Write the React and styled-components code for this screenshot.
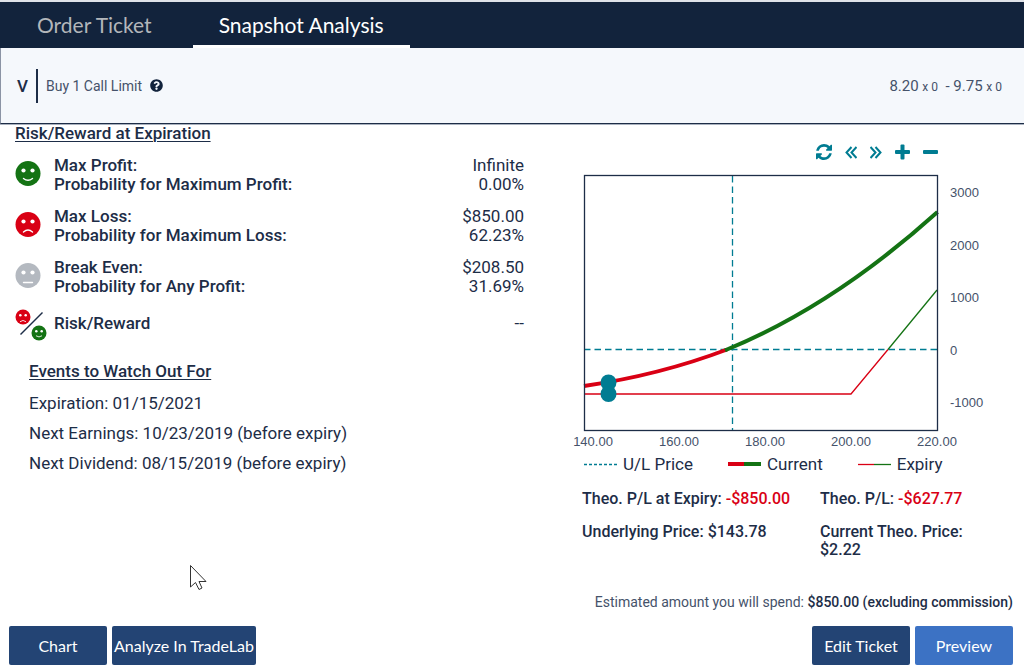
import React, { useState } from "react";
import styled, { createGlobalStyle } from "styled-components";
import { FaQuestionCircle } from "react-icons/fa";

const GlobalStyle = createGlobalStyle`
  * {
    box-sizing: border-box;
  }

  body {
    margin: 0;
    background: #ffffff;
    color: #1d2d47;
    font-family: Roboto, "Liberation Sans", sans-serif;
  }

  h2, h3, p, dl, dt, dd, ul {
    margin: 0;
    padding: 0;
  }
`;

const Page = styled.div`
  display: flex;
  flex-direction: column;
  min-height: 100vh;
  position: relative;
`;

const TabBar = styled.nav`
  display: flex;
  gap: 15px;
  height: 48px;
  padding-left: 11px;
  border-top: 2px solid #dfe2e8;
  background: #12233c;
`;

const Tab = styled.button`
  padding: 3px 26px 0;
  border: 0;
  border-bottom: 3px solid ${({ $active }) => ($active ? "#ffffff" : "transparent")};
  background: none;
  color: ${({ $active }) => ($active ? "#ffffff" : "#b3b6ba")};
  font-family: Lato, sans-serif;
  font-size: 21px;
  line-height: 24px;
  white-space: nowrap;
  cursor: pointer;
`;

const OrderBar = styled.header`
  display: flex;
  align-items: center;
  height: 76px;
  padding: 0 22px 0 16px;
  border-left: 1px solid #8b94a5;
  border-bottom: 1px solid #1d2d47;
  box-shadow: 0 1px 0 #a9b1be;
  background: #f5f8fc;
`;

const Ticker = styled.span`
  padding-right: 8px;
  border-right: 2px solid #1d2d47;
  font-size: 17px;
  font-weight: 500;
  line-height: 34px;
`;

const OrderText = styled.span`
  display: flex;
  align-items: center;
  gap: 8px;
  flex: 1;
  padding-left: 8px;
  color: #45526a;
  font-size: 14px;

  svg {
    width: 13px;
    height: 13px;
    color: #12233c;
  }
`;

const Quote = styled.span`
  color: #45526a;
  font-size: 15px;
  white-space: pre;

  small {
    font-size: 12px;
  }
`;

const Body = styled.main`
  display: grid;
  grid-template-columns: minmax(0, 509fr) minmax(0, 431fr);
  column-gap: 58px;
  padding: 0 11px 0 15px;
`;

const Heading = styled.h2`
  font-size: 17px;
  font-weight: 500;
  line-height: 18px;
  text-decoration: underline;
  text-decoration-thickness: 1px;
  text-underline-offset: 2px;
`;

const RiskList = styled.dl`
  display: grid;
  gap: 13px;
  margin-top: 14px;
`;

const RiskRow = styled.div`
  display: grid;
  grid-template-columns: 39px 1fr auto;
  align-items: center;
  min-height: 28px;
  font-size: 17px;
  line-height: 19px;

  dt {
    font-weight: 500;
  }

  dd {
    text-align: right;
  }
`;

const FaceCell = styled.div`
  height: 28px;

  svg {
    display: block;
  }
`;

const Events = styled.section`
  margin-top: 25px;
  padding-left: 14px;
`;

const EventList = styled.ul`
  margin-top: 8px;
  list-style: none;
  font-size: 17px;
  line-height: 30px;
`;

const Toolbar = styled.div`
  display: flex;
  justify-content: flex-end;
  gap: 13px;
  padding: 20px 75px 14px 0;
`;

const ToolButton = styled.button`
  display: flex;
  padding: 0;
  border: 0;
  background: none;
  color: #007c92;
  cursor: pointer;
`;

const ChartSvg = styled.svg`
  display: block;
  width: 100%;
  height: auto;
  overflow: visible;

  text {
    fill: #45526a;
    font-family: "Liberation Sans", Arial, sans-serif;
    font-size: 13px;
  }
`;

const Legend = styled.div`
  display: flex;
  gap: 35px;
  margin-top: 4px;
  padding-left: 2px;
  font-size: 17px;
  line-height: 20px;
`;

const LegendItem = styled.span`
  display: flex;
  align-items: center;
  gap: 6px;
`;

const Stats = styled.div`
  display: grid;
  grid-template-columns: 238px 160px;
  row-gap: 15px;
  margin-top: 16px;
  font-size: 16px;
  font-weight: 500;
  line-height: 18px;
`;

const Loss = styled.span`
  color: #d90014;
`;

const Footer = styled.footer`
  margin-top: auto;
  padding: 16px 11px 2px 9px;
`;

const Estimate = styled.p`
  margin-bottom: 15px;
  color: #45526a;
  font-size: 14px;
  line-height: 18px;
  text-align: right;

  strong {
    color: #1d2d47;
    font-weight: 500;
  }
`;

const Actions = styled.div`
  display: flex;
  gap: 5px;
`;

const ActionButton = styled.button`
  min-width: 98px;
  height: 39px;
  margin-left: ${({ $pushRight }) => ($pushRight ? "auto" : "0")};
  padding: 0 2px;
  border: 0;
  border-radius: 2px;
  background: ${({ $primary }) => ($primary ? "#3c72c4" : "#234474")};
  color: #ffffff;
  font-family: Lato, sans-serif;
  font-size: 16px;
  white-space: nowrap;
  cursor: pointer;
`;

const Pointer = styled.svg`
  position: absolute;
  left: 189px;
  top: 564px;
`;

const GREEN = "#147314";
const RED = "#d90014";
const TEAL = "#007c92";
const GRAY = "#b4b9c0";

const mouths = {
  happy: "M8 17.5Q12.5 21 17 17.5",
  sad: "M8 20Q12.5 16 17 20",
  flat: "M8 19.5H17",
};

const FaceShape = ({ mood, color }) => (
  <>
    <circle cx="12.5" cy="12.5" r="12.5" fill={color} />
    <circle cx="8" cy="9.5" r="2.1" fill="#fff" />
    <circle cx="17" cy="9.5" r="2.1" fill="#fff" />
    <path d={mouths[mood]} fill="none" stroke="#fff" strokeWidth="1.4" strokeLinecap="round" />
  </>
);

const Face = (props) => (
  <svg width="26" height="25" viewBox="0 0 26 25" aria-hidden="true">
    <g transform="translate(0.5 0)">
      <FaceShape {...props} />
    </g>
  </svg>
);

const RatioIcon = () => (
  <svg width="32" height="32" viewBox="0 0 32 32" aria-hidden="true">
    <g transform="translate(0.5 0.5) scale(0.6)">
      <FaceShape mood="sad" color={RED} />
    </g>
    <path d="M5.5 25.5L27.5 3.5" stroke="#1d2d47" strokeWidth="1.4" />
    <g transform="translate(16.5 16.5) scale(0.6)">
      <FaceShape mood="happy" color={GREEN} />
    </g>
  </svg>
);

const risks = [
  {
    icon: <Face mood="happy" color={GREEN} />,
    labels: ["Max Profit:", "Probability for Maximum Profit:"],
    values: ["Infinite", "0.00%"],
  },
  {
    icon: <Face mood="sad" color={RED} />,
    labels: ["Max Loss:", "Probability for Maximum Loss:"],
    values: ["$850.00", "62.23%"],
  },
  {
    icon: <Face mood="flat" color={GRAY} />,
    labels: ["Break Even:", "Probability for Any Profit:"],
    values: ["$208.50", "31.69%"],
  },
  { icon: <RatioIcon />, labels: ["Risk/Reward"], values: ["--"] },
];

const events = [
  "Expiration: 01/15/2021",
  "Next Earnings: 10/23/2019 (before expiry)",
  "Next Dividend: 08/15/2019 (before expiry)",
];

const tools = [
  {
    name: "Reset",
    icon: (
      <svg width="16" height="16" viewBox="0 0 1536 1536" fill="currentColor">
        <path d="M1511 928q0 5-1 7-64 268-268 434.5t-478 166.5q-146 0-282.5-55t-243.5-157l-129 129q-19 19-45 19t-45-19-19-45v-448q0-26 19-45t45-19h448q26 0 45 19t19 45-19 45l-137 137q71 66 161 102t187 36q134 0 250-65t186-179q11-17 53-117 8-23 30-23h192q13 0 22.5 9.5t9.5 22.5zm25-800v448q0 26-19 45t-45 19h-448q-26 0-45-19t-19-45 19-45l138-138q-148-137-349-137-134 0-250 65t-186 179q-11 17-53 117-8 23-30 23h-199q-13 0-22.5-9.5t-9.5-22.5v-7q65-268 270-434.5t480-166.5q146 0 284 55.5t245 156.5l130-129q19-19 45-19t45 19 19 45z" />
      </svg>
    ),
  },
  {
    name: "Scroll left",
    icon: (
      <svg width="12" height="16" viewBox="0 0 12 16" fill="none" stroke="currentColor" strokeWidth="2">
        <path d="M6.5 3L1.5 8.5L6.5 14M11.5 3L6.5 8.5L11.5 14" />
      </svg>
    ),
  },
  {
    name: "Scroll right",
    icon: (
      <svg width="12" height="16" viewBox="0 0 12 16" fill="none" stroke="currentColor" strokeWidth="2">
        <path d="M0.5 3L5.5 8.5L0.5 14M5.5 3L10.5 8.5L5.5 14" />
      </svg>
    ),
  },
  {
    name: "Zoom in",
    icon: (
      <svg width="15" height="16" viewBox="0 0 15 16" fill="currentColor">
        <rect x="0" y="6" width="15" height="4" rx="1" />
        <rect x="5.5" y="0.5" width="4" height="15" rx="1" />
      </svg>
    ),
  },
  {
    name: "Zoom out",
    icon: (
      <svg width="15" height="16" viewBox="0 0 15 16" fill="currentColor">
        <rect x="0" y="6" width="15" height="4" rx="1" />
      </svg>
    ),
  },
];

const priceTicks = ["140.00", "160.00", "180.00", "200.00", "220.00"];
const profitTicks = ["3000", "2000", "1000", "0", "-1000"];

const PayoffChart = () => (
  <ChartSvg viewBox="0 0 431 276" role="img" aria-label="Profit and loss by underlying price">
    <path d="M2 175.5H355" stroke={TEAL} strokeWidth="1.3" strokeDasharray="6.5 4" />
    <path d="M150.5 2V256" stroke={TEAL} strokeWidth="1.3" strokeDasharray="6.5 4" />
    <path d="M2 220H269L306 175.5" fill="none" stroke={RED} strokeWidth="1.3" />
    <path d="M306 175.5L355 116" stroke={GREEN} strokeWidth="1.3" />
    <path d="M2 212Q78 201 145 175.5" fill="none" stroke={RED} strokeWidth="4" />
    <path d="M143 176.3L145 175.5Q251 132 355.5 38" fill="none" stroke={GREEN} strokeWidth="4" />
    <rect x="2.5" y="1.5" width="353" height="255" fill="none" stroke="#1d2d47" strokeWidth="1.3" />
    <circle cx="26.5" cy="208.5" r="8" fill={TEAL} />
    <circle cx="26.5" cy="220" r="8" fill={TEAL} />
    {priceTicks.map((tick, i) => (
      <text key={tick} x={11 + i * 86} y="272" textAnchor="middle">
        {tick}
      </text>
    ))}
    {profitTicks.map((tick, i) => (
      <text key={tick} x="368" y={23 + i * 52.5}>
        {tick}
      </text>
    ))}
  </ChartSvg>
);

const App = () => {
  const [tab, setTab] = useState("Snapshot Analysis");

  return (
    <Page>
      <GlobalStyle />
      <TabBar>
        {["Order Ticket", "Snapshot Analysis"].map((name) => (
          <Tab key={name} $active={tab === name} onClick={() => setTab(name)}>
            {name}
          </Tab>
        ))}
      </TabBar>
      <OrderBar>
        <Ticker>V</Ticker>
        <OrderText>
          Buy 1 Call Limit <FaQuestionCircle />
        </OrderText>
        <Quote>
          8.20 <small>x 0</small>  - 9.75 <small>x 0</small>
        </Quote>
      </OrderBar>

      <Body>
        <section>
          <Heading>Risk/Reward at Expiration</Heading>
          <RiskList>
            {risks.map(({ icon, labels, values }) => (
              <RiskRow key={labels[0]}>
                <FaceCell>{icon}</FaceCell>
                <div>
                  {labels.map((label) => (
                    <dt key={label}>{label}</dt>
                  ))}
                </div>
                <div>
                  {values.map((value) => (
                    <dd key={value}>{value}</dd>
                  ))}
                </div>
              </RiskRow>
            ))}
          </RiskList>
          <Events>
            <Heading>Events to Watch Out For</Heading>
            <EventList>
              {events.map((event) => (
                <li key={event}>{event}</li>
              ))}
            </EventList>
          </Events>
        </section>

        <section>
          <Toolbar>
            {tools.map(({ name, icon }) => (
              <ToolButton key={name} aria-label={name}>
                {icon}
              </ToolButton>
            ))}
          </Toolbar>
          <PayoffChart />
          <Legend>
            <LegendItem>
              <svg width="33" height="4">
                <path d="M0 2.5H33" stroke={TEAL} strokeWidth="1.3" strokeDasharray="3 2" />
              </svg>
              U/L Price
            </LegendItem>
            <LegendItem>
              <svg width="33" height="4">
                <path d="M0 2H16" stroke={RED} strokeWidth="4" />
                <path d="M16 2H33" stroke={GREEN} strokeWidth="4" />
              </svg>
              Current
            </LegendItem>
            <LegendItem>
              <svg width="33" height="4">
                <path d="M0 2.5H16" stroke={RED} strokeWidth="1.3" />
                <path d="M16 2.5H33" stroke={GREEN} strokeWidth="1.3" />
              </svg>
              Expiry
            </LegendItem>
          </Legend>
          <Stats>
            <p>
              Theo. P/L at Expiry: <Loss>-$850.00</Loss>
            </p>
            <p>
              Theo. P/L: <Loss>-$627.77</Loss>
            </p>
            <p>Underlying Price: $143.78</p>
            <p>Current Theo. Price: $2.22</p>
          </Stats>
        </section>
      </Body>

      <Footer>
        <Estimate>
          Estimated amount you will spend: <strong>$850.00 (excluding commission)</strong>
        </Estimate>
        <Actions>
          <ActionButton>Chart</ActionButton>
          <ActionButton>Analyze In TradeLab</ActionButton>
          <ActionButton $pushRight>Edit Ticket</ActionButton>
          <ActionButton $primary>Preview</ActionButton>
        </Actions>
      </Footer>

      <Pointer width="18" height="27" viewBox="0 0 18 27" aria-hidden="true">
        <path
          d="M1.5 1.5V23L6.5 18.5L10 25.5L13 24L10 17.5H17Z"
          fill="#fff"
          stroke="#333"
          strokeWidth="1"
        />
      </Pointer>
    </Page>
  );
};

export default App;
